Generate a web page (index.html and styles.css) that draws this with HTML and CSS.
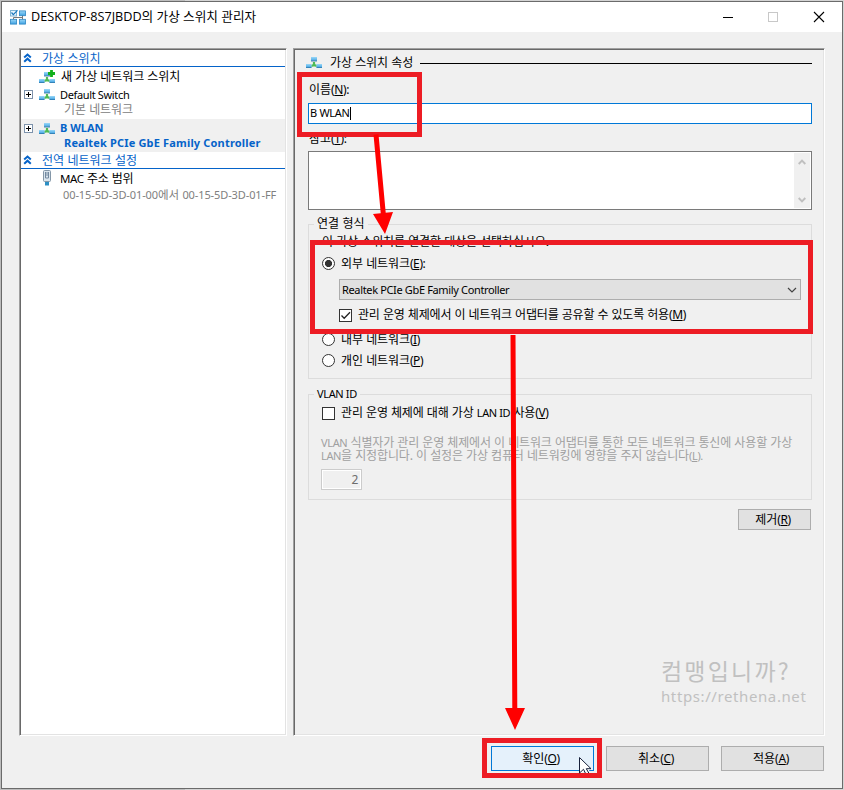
FILE: index.html
```html
<!DOCTYPE html>
<html lang="ko">
<head>
<meta charset="utf-8">
<title>가상 스위치 관리자</title>
<link rel="stylesheet" href="styles.css">
</head>
<body>
<svg class="defs" aria-hidden="true">
  <defs>
    <linearGradient id="pc" x1="0" y1="0" x2="0" y2="1"><stop offset="0" stop-color="#9bd8f8"/><stop offset="1" stop-color="#3fa2e2"/></linearGradient>
    <symbol id="net" viewBox="0 0 16 13">
      <path d="M8 6v2.500M5.500 9.500h5" fill="none" stroke="#4fbb55" stroke-width="2.200"/>
      <path d="M5.500 10.500 8 8l2.500 2.500" fill="none" stroke="#4fbb55" stroke-width="1.200"/>
      <rect x="5" y="1" width="6" height="4" fill="url(#pc)"/>
      <path d="M5 5h6" stroke="#4f86ab"/>
      <rect x="0" y="8" width="5.500" height="3.500" fill="url(#pc)"/>
      <rect x="10.500" y="8" width="5.500" height="3.500" fill="url(#pc)"/>
      <path d="M0 11.500h5.500M10.500 11.500H16" stroke="#3583b8"/>
    </symbol>
    <symbol id="chev" viewBox="0 0 8 10"><path d="M.7 4.500 4 1.500l3.300 3M.7 8.700 4 5.700l3.300 3" fill="none" stroke="#0563c9" stroke-width="2"/></symbol>
    <symbol id="plus" viewBox="0 0 9 9"><rect x=".5" y=".5" width="8" height="8" fill="#fff" stroke="#7e93ac"/><path d="M2 4.500h5M4.500 2v5" stroke="#000"/></symbol>
  </defs>
</svg>
<div class="window">
  <header class="titlebar">
    <svg class="app-icon" viewBox="0 0 16 15">
      <path d="M12.500 5v5M3.500 9.500V7.500h9" stroke="#777" fill="none"/>
      <rect x=".5" y=".5" width="6" height="5.500" fill="#e8f5fd" stroke="#7fb4d4"/>
      <path d="M1.500 2.500 3.300 4.600 7.500.3" fill="none" stroke="#1977bd" stroke-width="1.200"/>
      <rect x="9.400" y=".9" width="6.200" height="4.800" fill="url(#pc)" stroke="#2f88c4" stroke-width=".8"/>
      <rect x=".4" y="9.300" width="6.200" height="4.800" fill="url(#pc)" stroke="#2f88c4" stroke-width=".8"/>
      <rect x="9.400" y="9.300" width="6.200" height="4.800" fill="url(#pc)" stroke="#2f88c4" stroke-width=".8"/>
    </svg>
    <h1>DESKTOP-8S7JBDD의 가상 스위치 관리자</h1>
    <svg class="captions" viewBox="0 0 102 12">
      <path d="M0 6.500h10" stroke="#000"/>
      <rect x="45.500" y="1.500" width="9" height="9" fill="none" stroke="#c8c8c8"/>
      <path d="M91 1l10 10M101 1 91 11" stroke="#000" stroke-width="1.100"/>
    </svg>
  </header>
  <main class="panes">
    <nav class="pane tree">
      <div class="section"><svg class="chev"><use href="#chev"/></svg><span>가상 스위치</span></div>
      <div class="item first"><span class="box"></span>
        <svg class="net add" viewBox="0 0 17 14"><use href="#net" y="1" width="16" height="13"/><path d="M12.500 0v7M9 3.500h7" stroke="#12b01c" stroke-width="2.800"/></svg>
        <span>새 가상 네트워크 스위치</span></div>
      <div class="item default"><span class="box"><svg><use href="#plus"/></svg></span><svg class="net"><use href="#net"/></svg><span class="en ds">Default Switch</span></div>
      <div class="sub basic">기본 네트워크</div>
      <div class="selected">
        <div class="item"><span class="box"><svg><use href="#plus"/></svg></span><svg class="net"><use href="#net"/></svg><b class="en bw">B WLAN</b></div>
        <b class="sub en adapter">Realtek PCIe GbE Family Controller</b>
      </div>
      <div class="section"><svg class="chev"><use href="#chev"/></svg><span>전역 네트워크 설정</span></div>
      <div class="item mac"><span class="box"></span>
        <svg class="nic" viewBox="0 0 10 16"><rect x="1.500" y=".5" width="7" height="11" rx="1" fill="#dbe5ed" stroke="#8497a8"/><path d="M3.500 2v6h3V2M5 2v4" fill="none" stroke="#7389a0"/><path d="M3 12h4v3.500H3z" fill="#2d8fc4"/></svg>
        <span><span class="en">MAC</span> 주소 범위</span></div>
      <div class="sub range"><span class="en">00-15-5D-3D-01-00</span>에서 <span class="en">00-15-5D-3D-01-FF</span></div>
    </nav>
    <section class="pane props">
      <div class="heading"><svg class="net"><use href="#net"/></svg><span>가상 스위치 속성</span><i class="rule"></i></div>
      <div class="label name">이름<span class="en">(<u>N</u>):</span></div>
      <div class="input"><span class="en">B WLAN</span><i class="caret"></i></div>
      <div class="label notes">참고<span class="en">(<u>T</u>):</span></div>
      <div class="textarea"><div class="scroll">
        <svg viewBox="0 0 8 6"><path d="M.7 5 4 1.700 7.300 5" fill="none" stroke="#bfbfbf" stroke-width="1.900"/></svg>
        <svg viewBox="0 0 8 6"><path d="M.7 1 4 4.300 7.300 1" fill="none" stroke="#bfbfbf" stroke-width="1.900"/></svg>
      </div></div>
      <div class="group conn">
        <div class="legend">연결 형식</div>
        <div class="intro">이 가상 스위치를 연결할 대상을 선택하십시오.</div>
        <div class="option ext"><i class="radio on"></i><span>외부 네트워크<span class="en">(<u>E</u>):</span></span></div>
        <div class="combo"><span class="en">Realtek PCIe GbE Family Controller</span><svg viewBox="0 0 10 6"><path d="M1 1l4 4 4-4" fill="none" stroke="#444" stroke-width="1.200"/></svg></div>
        <div class="option share"><i class="check"><svg viewBox="0 0 13 13"><path d="M2.500 6.500 5.200 9.300 11 3.300" fill="none" stroke="#222" stroke-width="1.300"/></svg></i><span>관리 운영 체제에서 이 네트워크 어댑터를 공유할 수 있도록 허용<span class="en">(<u>M</u>)</span></span></div>
        <div class="option int"><i class="radio"></i><span>내부 네트워크<span class="en">(<u>I</u>)</span></span></div>
        <div class="option priv"><i class="radio"></i><span>개인 네트워크<span class="en">(<u>P</u>)</span></span></div>
      </div>
      <div class="group vlan">
        <div class="legend en">VLAN ID</div>
        <div class="option use"><i class="check"></i><span>관리 운영 체제에 대해 가상 <span class="en lan">LAN ID</span> 사용<span class="en">(<u>V</u>)</span></span></div>
        <p class="desc"><span class="en">VLAN</span> 식별자가 관리 운영 체제에서 이 네트워크 어댑터를 통한 모든 네트워크 통신에 사용할 가상<br><span class="en">LAN</span>을 지정합니다. 이 설정은 가상 컴퓨터 네트워킹에 영향을 주지 않습니다<span class="en">(<u>L</u>).</span></p>
        <div class="number en">2</div>
      </div>
      <div class="button remove"><span>제거<span class="en">(<u>R</u>)</span></span></div>
      <div class="mark"><div class="mark-name">컴맹입니까?</div><div class="mark-url">https://rethena.net</div></div>
    </section>
  </main>
  <footer class="actions">
    <div class="button ok"><span>확인<span class="en">(<u>O</u>)</span></span></div>
    <div class="button"><span>취소<span class="en">(<u>C</u>)</span></span></div>
    <div class="button"><span>적용<span class="en">(<u>A</u>)</span></span></div>
  </footer>
</div>
<svg class="notes-layer" viewBox="0 0 844 790">
  <g fill="none" stroke="#ed1c24" stroke-width="5">
    <rect x="299.500" y="74.500" width="120" height="60"/>
    <rect x="312.500" y="242.500" width="498" height="89"/>
    <rect x="484.500" y="740.500" width="115" height="35"/>
  </g>
  <path d="M376 134.500 383.500 216M513 335l1.800 376" stroke="#f00" stroke-width="5" fill="none"/>
  <path d="M373 214l20-2-8 22zM505 708h20l-10 22z" fill="#f00"/>
  <path d="M579.500 757.500v15h2.800l2.200-1.900 1.300 1.900h4l-.9-3h3.100z" fill="#fff"/>
  <path d="M579.500 773v-15.500l11.500 11.200h-4.700l2.500 4.300M579.500 773l4-3.700 1.800 3.700" fill="none" stroke="#17203a"/>
</svg>
</body>
</html>
```
FILE: styles.css
```css
* { box-sizing: border-box; }
html, body { margin: 0; width: 844px; height: 790px; overflow: hidden; }
body {
  padding: 1px;
  background: linear-gradient(90deg, #bdbdbd 0 185px, #d4d4d4 185px);
  font: 12px/14px "Noto Sans CJK KR", sans-serif;
  color: #000;
}
.defs { position: absolute; width: 0; height: 0; }
svg { display: block; flex: none; }
u { text-underline-offset: 1px; text-decoration-thickness: 1px; }
.en { font-family: "Noto Sans", "Noto Sans CJK KR", sans-serif; font-size: 11px; letter-spacing: -0.35px; }
.label .en, .option .en, .remove .en { font-size: 12px; letter-spacing: -0.4px; }
.window { height: 788px; border: 1px solid #6b6b6b; background: #f0f0f0; display: flex; flex-direction: column; }
.titlebar { height: 30px; background: #fff; display: flex; align-items: center; padding: 0 17px 0 8px; flex: none; }
.app-icon { width: 16px; height: 15px; }
h1 { margin: -2px auto 0 5px; font: 12.650px/16px "Open Sans", "Noto Sans CJK KR", sans-serif; }
.captions { width: 102px; height: 12px; }
.panes { display: flex; gap: 6px; padding: 16px 17px 0; height: 704px; flex: none; }
.pane {
  border: 1px solid; border-color: #a0a0a0 #fff #fff #a0a0a0;
  box-shadow: inset 1px 1px #696969, inset -1px -1px #e3e3e3;
  padding: 1px; height: 688px; white-space: nowrap; flex: none;
}
.tree { width: 268px; background: #fff; }
.section { height: 17px; line-height: 14px; border-bottom: 1px solid #0563c9; color: #0563c9; display: flex; align-items: center; padding-left: 2px; gap: 10px; }
.section span { margin-top: -1px; }
.chev { width: 9px; height: 10px; }
.item { display: flex; align-items: center; padding-left: 3px; }
.box { width: 9px; margin-right: 6px; }
.box svg { width: 9px; height: 9px; }
.net { width: 16px; height: 13px; margin-right: 5px; }
.net.add { width: 17px; height: 14px; margin-right: 5px; }
.first { height: 19px; }
.first > span { margin-top: -2px; letter-spacing: -0.1px; }
.default { height: 17px; }
.sub { display: block; padding-left: 43px; color: #808080; }
.basic { height: 16px; line-height: 11px; font-size: 12px; letter-spacing: -0.1px; }
.selected { height: 33px; background: #f0f0f0; color: #0563c9; }
.selected .item { height: 18px; }
.selected .bw { letter-spacing: 0; }
.selected .sub { color: #0563c9; line-height: 12px; letter-spacing: 0.170px; }
.mac { height: 18px; letter-spacing: -0.2px; }
.nic { width: 10px; height: 16px; margin: 0 8px 0 3px; }
.mac .en { font-size: 11.500px; }
.range { line-height: 14px; padding-left: 42px; font-size: 11.500px; }
.range .en { letter-spacing: -0.1px; }
.props { width: 532px; padding: 1px 12px 0 14px; }
.heading { display: flex; align-items: center; height: 25px; margin-left: -2px; letter-spacing: -0.1px; }
.heading .net { margin-right: 8px; }
.heading span { margin-top: -2px; }
.rule { flex: 1; border-top: 1px solid #000; margin: 2px 0 0 7px; }
.label { height: 28px; line-height: 28px; padding-left: 1px; }
.input { height: 21px; border: 1px solid #0078d7; background: #fff; display: flex; align-items: center; padding-left: 1px; }
.input .en { letter-spacing: -0.3px; margin-top: -1px; }
.caret { width: 1px; height: 13px; background: #000; }
.notes { height: 27px; }
.textarea { height: 59px; border: 1px solid #7a7a7a; background: #fff; display: flex; justify-content: flex-end; padding: 1px; }
.scroll { width: 16px; background: #f0f0f0; display: flex; flex-direction: column; justify-content: space-between; align-items: center; padding: 6px 0 5px; }
.scroll svg { width: 8px; height: 6px; }
.group { border: 1px solid #dcdcdc; }
.conn { height: 155px; margin-top: 14px; padding-left: 13px; }
.legend { width: max-content; padding: 0 3px; margin: -9px 0 0 -8px; height: 14px; background: #f0f0f0; }
.intro { height: 21px; line-height: 21px; letter-spacing: -0.120px; }
.option { display: flex; align-items: center; height: 21px; gap: 6px; letter-spacing: -0.1px; }
.ext { margin-top: 2px; }
.radio, .check { width: 13px; height: 13px; border: 1px solid #333; background: #fff; flex: none; }
.radio { border-radius: 50%; }
.radio.on { background: radial-gradient(circle, #333 0 3.200px, #fff 3.900px); }
.check svg { width: 13px; height: 13px; margin: -1px; }
.combo { width: 462px; height: 21px; margin: 5px 0 0 17px; border: 1px solid #adadad; background: #e1e1e1; display: flex; align-items: center; justify-content: space-between; padding: 0 3px 0 2px; }
.combo svg { width: 10px; height: 6px; }
.share { margin: 5px 0 0 17px; letter-spacing: -0.180px; }
.share > span { margin-top: -2px; }
.int { margin-top: 3px; }
.vlan { height: 106px; margin-top: 15px; padding-left: 12px; }
.vlan .legend { margin: -8px 0 0 -7px; }
.use { margin: 2px 0 0 1px; letter-spacing: -0.150px; }
.use > span { margin-top: -2px; }
.use .lan { font-size: 11px; letter-spacing: -0.4px; }
.desc { margin: 11px 0 0; line-height: 13px; color: #a0a0a0; letter-spacing: -0.150px; }
.desc .en { line-height: 1; }
.number { width: 41px; height: 21px; margin-top: 8px; border: 1px solid #ccc; box-shadow: inset 0 0 0 1px #fff; color: #6d6d6d; text-align: right; line-height: 19px; padding-right: 3px; font-size: 12px; }
.button { border: 1px solid #adadad; background: #e1e1e1; display: flex; align-items: center; justify-content: center; }
.button > span { margin: -1px 3px 0 0; }
.remove { width: 73px; height: 21px; margin: 9px 1px 0 auto; }
.mark { margin: 123px 5px 0 auto; width: 146px; color: #c0c0c0; }
.mark-name { font-size: 23px; line-height: 34px; letter-spacing: 2.200px; }
.mark-url { font: 15px/18px "Noto Sans", sans-serif; letter-spacing: 0.600px; }
.actions { display: flex; justify-content: flex-end; gap: 12px; padding: 10px 18px 0; }
.actions .button { width: 103px; height: 25px; }
.actions .en { font-size: 12px; }
.actions .ok { border-color: #0078d7; background: #e5f1fb; }
.notes-layer { position: absolute; left: 0; top: 0; width: 844px; height: 790px; pointer-events: none; }
```
